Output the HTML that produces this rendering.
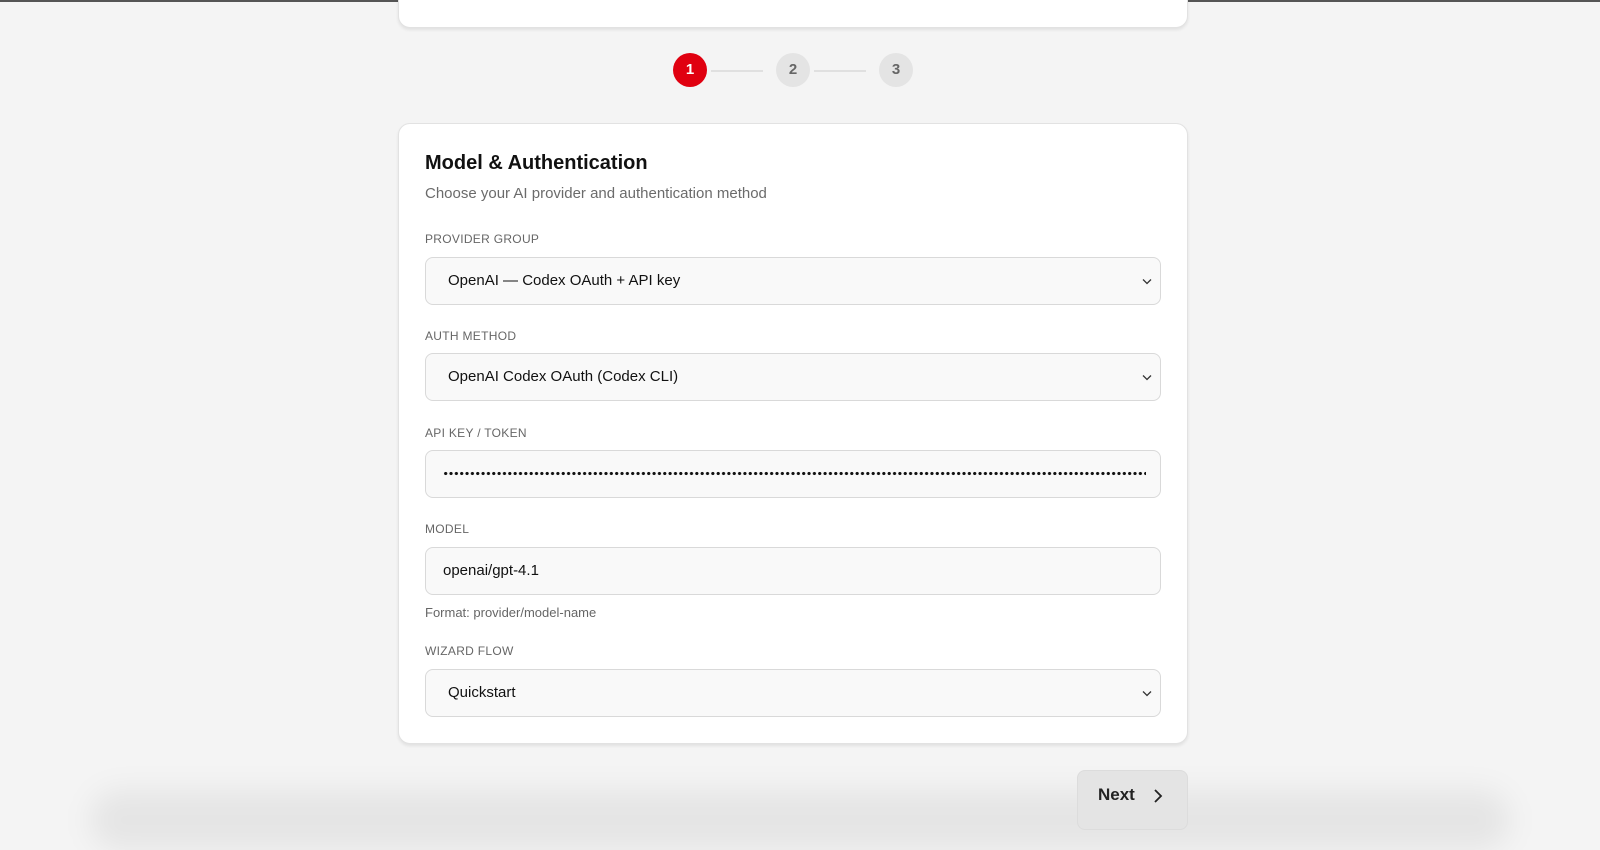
<!DOCTYPE html>
<html><head><meta charset="utf-8"><style>
*{box-sizing:border-box;margin:0;padding:0}
body{width:1600px;height:811px;overflow:hidden;background:#f4f4f4;font-family:"Liberation Sans",sans-serif;position:relative;color:#111}
.topline{position:absolute;left:0;top:0;width:1600px;height:2px;background:#555}
.card{position:absolute;left:398px;width:790px;background:#fff;border:1px solid #e2e2e2;border-radius:12px;box-shadow:0 2px 3px rgba(0,0,0,.08)}
.step{position:absolute;top:53px;width:34px;height:34px;border-radius:50%;background:#e4e4e4;color:#666;font-size:15px;text-align:center;line-height:34px;font-weight:bold}
.line{position:absolute;top:70px;height:2px;width:52px;background:#e0e0e0}
.lbl{position:absolute;left:425px;font-size:12px;color:#666;letter-spacing:.3px}
.inp{position:absolute;left:425px;width:736px;height:48px;background:#f9f9f9;border:1px solid #d9d9d9;border-radius:8px;font-size:15px;color:#111;line-height:46px;padding-left:21px}
.chev{position:absolute;right:7px;top:17px;width:12px;height:12px}
</style></head><body>
<div class="topline"></div>
<div class="card" style="top:-20px;height:48px"></div>
<div class="step" style="left:673px;background:#e00010;color:#fff">1</div>
<div class="line" style="left:711px"></div>
<div class="step" style="left:776px">2</div>
<div class="line" style="left:814px"></div>
<div class="step" style="left:879px">3</div>
<div class="card" style="top:123px;height:621px"></div>
<div style="position:absolute;left:425px;top:152px;font-size:20px;font-weight:bold;color:#111">Model &amp; Authentication</div>
<div style="position:absolute;left:425px;top:185px;font-size:15px;color:#6b6b6b">Choose your AI provider and authentication method</div>

<div class="lbl" style="top:232px">PROVIDER GROUP</div>
<div class="inp" style="top:257px;padding-left:22px">OpenAI — Codex OAuth + API key<svg class="chev" viewBox="0 0 12 12"><path d="M2 4.5l4 4 4-4" fill="none" stroke="#333" stroke-width="1.3"/></svg></div>

<div class="lbl" style="top:329px">AUTH METHOD</div>
<div class="inp" style="top:353px;padding-left:22px">OpenAI Codex OAuth (Codex CLI)<svg class="chev" viewBox="0 0 12 12"><path d="M2 4.5l4 4 4-4" fill="none" stroke="#333" stroke-width="1.3"/></svg></div>

<div class="lbl" style="top:426px">API KEY / TOKEN</div>
<div class="inp" style="top:450px"><div style="position:absolute;left:17px;right:14px;top:20px;height:5px;background:radial-gradient(circle,#111 1.4px,transparent 1.8px) 0 0/5.35px 5px repeat-x"></div></div>

<div class="lbl" style="top:522px">MODEL</div>
<div class="inp" style="top:547px;padding-left:17px">openai/gpt-4.1</div>
<div style="position:absolute;left:425px;top:605px;font-size:13px;color:#666">Format: provider/model-name</div>

<div class="lbl" style="top:644px">WIZARD FLOW</div>
<div class="inp" style="top:669px;padding-left:22px">Quickstart<svg class="chev" viewBox="0 0 12 12"><path d="M2 4.5l4 4 4-4" fill="none" stroke="#333" stroke-width="1.3"/></svg></div>

<div style="position:absolute;left:90px;top:790px;width:1420px;height:60px;border-radius:40px;background:rgba(0,0,0,.06);filter:blur(14px)"></div>
<div style="position:absolute;left:1077px;top:770px;width:111px;height:60px;background:#e4e4e4;border-radius:8px;border:1px solid #dcdcdc"><span style="position:absolute;left:20px;top:14px;font-size:17px;font-weight:bold;color:#222">Next</span><svg style="position:absolute;left:74px;top:17px" width="12" height="16" viewBox="0 0 12 16"><path d="M3 2l6 6-6 6" fill="none" stroke="#222" stroke-width="1.8"/></svg></div>
</body></html>
